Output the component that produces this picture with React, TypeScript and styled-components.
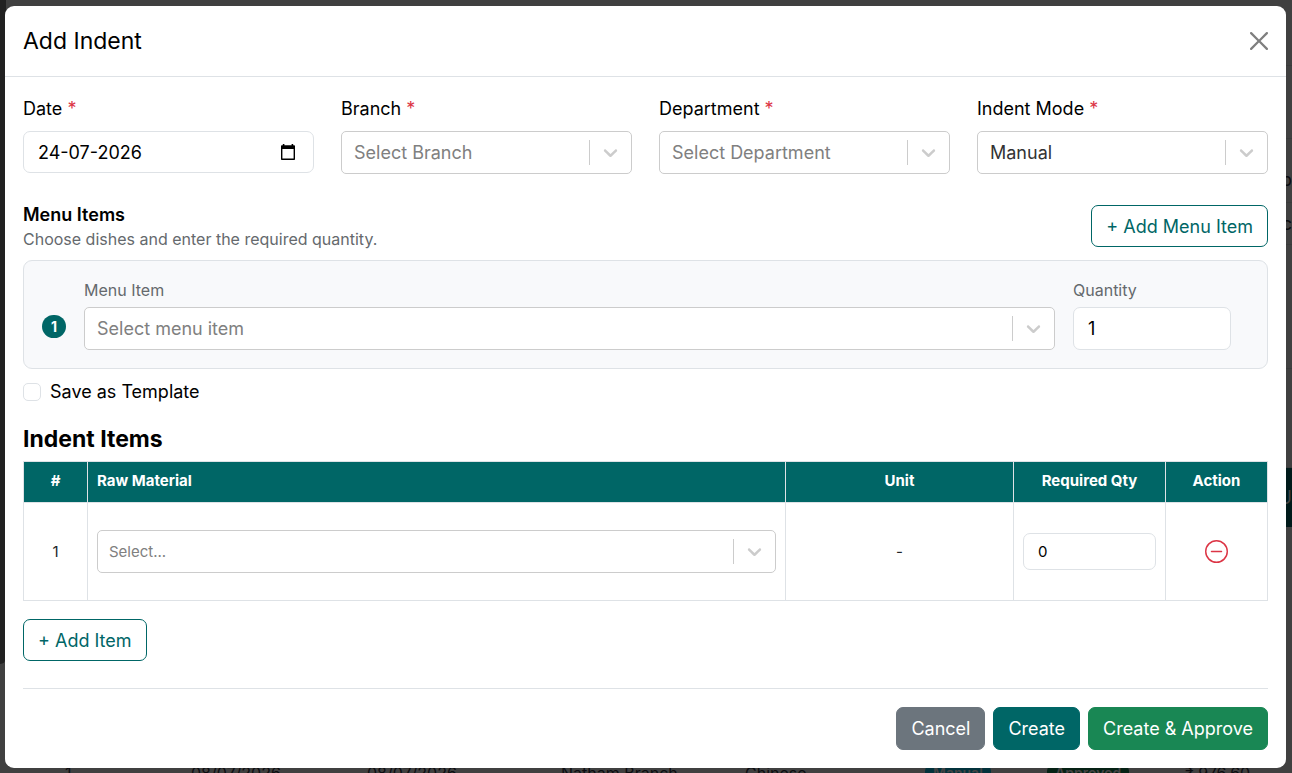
import React, { useId, useState } from 'react';
import styled, { createGlobalStyle, css } from 'styled-components';
import { BsDashCircle } from 'react-icons/bs';

const teal = '#006666';
const line = '#dee2e6';

const GlobalStyle = createGlobalStyle`
  *, *::before, *::after { box-sizing: border-box; }
  body {
    margin: 0;
    background: #404040;
    color: #000;
    font-family: Inter, "Liberation Sans", sans-serif;
    font-size: 18px;
    line-height: 27px;
  }
  button, input, select { font: inherit; }
`;

/* ---------- dimmed page behind the dialog ---------- */

const Page = styled.div`
  position: relative;
  min-height: 100vh;
  padding: 6px 6px 5px 5px;
  overflow: hidden;
`;

const Behind = styled.div`
  position: absolute;
  inset: 0;
  display: flex;
  flex-direction: column;
  justify-content: space-between;
  overflow: hidden;
  color: #0c0d10;
`;

const BehindTop = styled.div`
  display: flex;
  justify-content: space-between;
  height: 664px;
`;

const SideRail = styled.div`
  width: 6px;
  background: #212121;
  border-bottom-right-radius: 6px;
`;

const RightEdge = styled.div`
  display: flex;
  flex-direction: column;
  align-items: flex-end;
  width: 10px;
  padding-top: 65px;
`;

const EdgeCell = styled.div<{ $height: number; $fill?: string; $top?: number }>`
  display: flex;
  align-items: center;
  justify-content: flex-end;
  width: 10px;
  height: ${p => p.$height}px;
  padding-top: ${p => p.$top ?? 0}px;
  border-top: 1px solid #393a3a;
  background: ${p => p.$fill ?? 'transparent'};
  color: ${p => (p.$fill ? '#444' : 'inherit')};
  overflow: hidden;
`;

const BehindRow = styled.div`
  display: grid;
  grid-template-columns: 126px 176px 194px 184px 180px 122px 138px 1fr;
  height: 8px;
  padding-left: 65px;
  overflow: hidden;
  font-size: 16px;
  line-height: 16px;
`;

const Pill = styled.span<{ $color: string }>`
  justify-self: start;
  padding: 0 8px;
  border-radius: 6px;
  background: ${p => p.$color};
  color: #444;
  font-size: 14px;
  font-weight: 600;
`;

/* ---------- dialog ---------- */

const Dialog = styled.div`
  position: relative;
  border-radius: 9px;
  background: #fff;
`;

const DialogHeader = styled.header`
  display: flex;
  align-items: center;
  justify-content: space-between;
  height: 71px;
  padding: 0 18px;
  border-bottom: 1px solid ${line};
`;

const Title = styled.h1`
  margin: 0;
  font-size: 23px;
  font-weight: 400;
  line-height: 34px;
`;

const CloseButton = styled.button`
  display: flex;
  padding: 0;
  border: 0;
  background: none;
  color: #7f7f7f;
  cursor: pointer;
`;

const Form = styled.form`
  display: flex;
  flex-direction: column;
  padding: 18px;
`;

const FieldRow = styled.div`
  display: grid;
  grid-template-columns: repeat(4, minmax(0, 1fr));
  gap: 27px;
`;

const Field = styled.div`
  display: flex;
  flex-direction: column;
  align-items: stretch;
`;

const Label = styled.label`
  margin-bottom: 9px;
`;

const SmallLabel = styled.label`
  margin-bottom: 5px;
  color: #65696d;
  font-size: 16px;
  line-height: 23px;
`;

const Required = styled.span`
  color: #dc3545;
`;

const boxed = css`
  width: 100%;
  border: 1px solid ${line};
  border-radius: 7px;
  background: #fff;
  color: #000;
  outline: 0;
`;

const DateBox = styled.div`
  ${boxed}
  display: flex;
  align-items: center;
  height: 42px;
  padding: 0 18px 0 14px;
`;

const DateInput = styled.input`
  flex: 1;
  min-width: 0;
  padding: 0;
  border: 0;
  outline: 0;
  background: none;
  color: inherit;
`;

const PickerButton = styled.button`
  display: flex;
  padding: 0;
  border: 0;
  background: none;
  color: #000;
`;

const TextInput = styled.input<{ $compact?: boolean }>`
  ${boxed}
  display: block;
  height: ${p => (p.$compact ? 37 : 43)}px;
  padding: 0 14px;
  font-size: ${p => (p.$compact ? 15 : 18)}px;
`;

const SelectWrap = styled.div`
  position: relative;
`;

const SelectBox = styled.select<{ $placeholder: boolean; $compact?: boolean }>`
  appearance: none;
  display: block;
  width: 100%;
  height: 43px;
  padding: 0 44px 0 ${p => (p.$compact ? 11 : 12)}px;
  border: 1px solid #ccc;
  border-radius: 5px;
  outline: 0;
  background: #fff;
  color: ${p => (p.$placeholder ? '#808080' : '#333')};
  font-size: ${p => (p.$compact ? 15 : 18)}px;
`;

const Indicator = styled.span`
  position: absolute;
  inset: 9px 1px 9px auto;
  display: flex;
  align-items: center;
  padding: 0 9px;
  border-left: 1px solid #ccc;
  color: #ccc;
  pointer-events: none;
`;

const SectionHead = styled.div`
  display: flex;
  align-items: center;
  justify-content: space-between;
  margin: 27px 0 9px;
`;

const SectionTitle = styled.h2`
  margin: 0;
  font-size: 18px;
  font-weight: 600;
  line-height: 27px;
`;

const SectionNote = styled.p`
  margin: 0;
  color: #65696d;
  font-size: 16px;
  line-height: 23px;
`;

const Button = styled.button<{ $fill?: string }>`
  height: ${p => (p.$fill ? 43 : 42)}px;
  padding: 0 14px;
  border: 1px solid ${p => p.$fill ?? teal};
  border-radius: 7px;
  background: ${p => p.$fill ?? '#fff'};
  color: ${p => (p.$fill ? '#fff' : teal)};
  white-space: nowrap;
  cursor: pointer;
`;

const MenuCard = styled.div`
  display: grid;
  grid-template-columns: 24px 1fr 158px;
  align-items: end;
  gap: 18px;
  padding: 18px 36px 18px 18px;
  border: 1px solid ${line};
  border-radius: 9px;
  background: #f8f9fb;
`;

const Badge = styled.span`
  margin-bottom: 12px;
  border-radius: 12px;
  background: ${teal};
  color: #fff;
  font-size: 14px;
  font-weight: 700;
  line-height: 23px;
  text-align: center;
`;

const CheckRow = styled.label`
  display: flex;
  align-items: center;
  gap: 9px;
  margin-top: 9px;
`;

const Checkbox = styled.input`
  appearance: none;
  width: 18px;
  height: 18px;
  margin: 0;
  border: 1px solid ${line};
  border-radius: 5px;
  background: #fff;
  &:checked { background: ${teal}; }
`;

const TableTitle = styled.h2`
  margin: 21px 0 8px;
  font-size: 23px;
  font-weight: 700;
  line-height: 27px;
`;

const Table = styled.table`
  width: 100%;
  table-layout: fixed;
  border-collapse: collapse;
  font-size: 15px;
  line-height: 22px;
`;

const HeadCell = styled.th<{ $width?: number; $left?: boolean }>`
  width: ${p => (p.$width ? `${p.$width}px` : 'auto')};
  height: 41px;
  padding: 0 9px 2px;
  border: 1px solid ${line};
  background: ${teal};
  color: #fff;
  font-weight: 700;
  text-align: ${p => (p.$left ? 'left' : 'center')};
`;

const Cell = styled.td`
  height: 98px;
  padding: 0 9px;
  border: 1px solid ${line};
  color: #212529;
  text-align: center;
  vertical-align: middle;
`;

const RemoveButton = styled.button`
  padding: 0;
  border: 0;
  background: none;
  color: #dc3545;
  cursor: pointer;
  vertical-align: middle;
  svg { display: block; }
`;

const AddRow = styled.div`
  margin: 18px 0 27px;
`;

const Actions = styled.footer`
  display: flex;
  justify-content: flex-end;
  gap: 8px;
  padding-top: 18px;
  border-top: 1px solid ${line};
`;

function CloseIcon() {
  return (
    <svg width="18" height="18" viewBox="0 0 16 16" fill="currentColor" aria-hidden="true">
      <path d="M.293.293a1 1 0 0 1 1.414 0L8 6.586 14.293.293a1 1 0 1 1 1.414 1.414L9.414 8l6.293 6.293a1 1 0 0 1-1.414 1.414L8 9.414l-6.293 6.293a1 1 0 0 1-1.414-1.414L6.586 8 .293 1.707a1 1 0 0 1 0-1.414z" />
    </svg>
  );
}

function CalendarIcon() {
  return (
    <svg width="14" height="16" viewBox="0 0 14 16" fill="currentColor" fillRule="evenodd" aria-hidden="true">
      <path d="M1.8 0h1.6v1.2h7.2V0h1.6v1.2H13.2q.8 0 .8.8v13.2q0 .8-.8.8H.8q-.8 0-.8-.8V2q0-.8.8-.8h1zM1.4 5v9.6h11.2V5z" />
    </svg>
  );
}

function ChevronIcon() {
  return (
    <svg width="23" height="23" viewBox="0 0 20 20" fill="currentColor" aria-hidden="true">
      <path d="M4.516 7.548c0.436-0.446 1.043-0.481 1.576 0l3.908 3.747 3.908-3.747c0.533-0.481 1.141-0.446 1.574 0 0.436 0.445 0.408 1.197 0 1.615-0.406 0.418-4.695 4.502-4.695 4.502-0.217 0.223-0.502 0.335-0.787 0.335s-0.57-0.112-0.789-0.335c0 0-4.287-4.084-4.695-4.502s-0.436-1.17 0-1.615z" />
    </svg>
  );
}

type DropdownProps = {
  id?: string;
  label?: string;
  text: string;
  chosen?: boolean;
  compact?: boolean;
};

function Dropdown({ id, label, text, chosen = false, compact }: DropdownProps) {
  return (
    <SelectWrap>
      <SelectBox id={id} aria-label={label} $placeholder={!chosen} $compact={compact}>
        <option>{text}</option>
      </SelectBox>
      <Indicator><ChevronIcon /></Indicator>
    </SelectWrap>
  );
}

function SelectField({ name, text, chosen }: { name: string; text: string; chosen?: boolean }) {
  const id = useId();
  return (
    <Field>
      <Label htmlFor={id}>{name} <Required>*</Required></Label>
      <Dropdown id={id} text={text} chosen={chosen} />
    </Field>
  );
}

function PageBehind() {
  return (
    <Behind aria-hidden="true">
      <BehindTop>
        <SideRail />
        <RightEdge>
          <EdgeCell $height={73} />
          <EdgeCell $height={64} $top={18}><span>p</span></EdgeCell>
          <EdgeCell $height={42}><span>c</span></EdgeCell>
          <EdgeCell $height={124} />
          <EdgeCell $height={99} />
          <EdgeCell $height={60} $fill="#001a1a"><span>U</span></EdgeCell>
        </RightEdge>
      </BehindTop>
      <BehindRow>
        <span>1</span>
        <span>08/07/2026</span>
        <span>08/07/2026</span>
        <span>Natham Branch</span>
        <span>Chinese</span>
        <Pill $color="#03323c">Manual</Pill>
        <Pill $color="#062215">Approved</Pill>
        <span>₹ 976.60</span>
      </BehindRow>
    </Behind>
  );
}

export default function App() {
  const [date, setDate] = useState('24-07-2026');
  const [quantity, setQuantity] = useState('1');
  const [required, setRequired] = useState('0');

  return (
    <>
      <GlobalStyle />
      <Page>
        <PageBehind />
        <Dialog role="dialog" aria-labelledby="dialog-title">
          <DialogHeader>
            <Title id="dialog-title">Add Indent</Title>
            <CloseButton type="button" aria-label="Close"><CloseIcon /></CloseButton>
          </DialogHeader>
          <Form onSubmit={e => e.preventDefault()}>
            <FieldRow>
              <Field>
                <Label htmlFor="date">Date <Required>*</Required></Label>
                <DateBox>
                  <DateInput id="date" value={date} onChange={e => setDate(e.target.value)} />
                  <PickerButton type="button" aria-label="Open calendar"><CalendarIcon /></PickerButton>
                </DateBox>
              </Field>
              <SelectField name="Branch" text="Select Branch" />
              <SelectField name="Department" text="Select Department" />
              <SelectField name="Indent Mode" text="Manual" chosen />
            </FieldRow>

            <SectionHead>
              <div>
                <SectionTitle>Menu Items</SectionTitle>
                <SectionNote>Choose dishes and enter the required quantity.</SectionNote>
              </div>
              <Button type="button">+ Add Menu Item</Button>
            </SectionHead>

            <MenuCard>
              <Badge>1</Badge>
              <Field>
                <SmallLabel htmlFor="menu-item">Menu Item</SmallLabel>
                <Dropdown id="menu-item" text="Select menu item" />
              </Field>
              <Field>
                <SmallLabel htmlFor="quantity">Quantity</SmallLabel>
                <TextInput id="quantity" value={quantity} onChange={e => setQuantity(e.target.value)} />
              </Field>
            </MenuCard>

            <CheckRow>
              <Checkbox type="checkbox" />
              Save as Template
            </CheckRow>

            <TableTitle>Indent Items</TableTitle>
            <Table>
              <thead>
                <tr>
                  <HeadCell $width={64}>#</HeadCell>
                  <HeadCell $left>Raw Material</HeadCell>
                  <HeadCell $width={228}>Unit</HeadCell>
                  <HeadCell $width={152}>Required Qty</HeadCell>
                  <HeadCell $width={102}>Action</HeadCell>
                </tr>
              </thead>
              <tbody>
                <tr>
                  <Cell>1</Cell>
                  <Cell><Dropdown label="Raw Material" text="Select..." compact /></Cell>
                  <Cell>-</Cell>
                  <Cell>
                    <TextInput
                      $compact
                      aria-label="Required Qty"
                      value={required}
                      onChange={e => setRequired(e.target.value)}
                    />
                  </Cell>
                  <Cell>
                    <RemoveButton type="button" aria-label="Remove item"><BsDashCircle size={23} /></RemoveButton>
                  </Cell>
                </tr>
              </tbody>
            </Table>

            <AddRow><Button type="button">+ Add Item</Button></AddRow>

            <Actions>
              <Button type="button" $fill="#6c757d">Cancel</Button>
              <Button type="submit" $fill={teal}>Create</Button>
              <Button type="button" $fill="#198754">Create &amp; Approve</Button>
            </Actions>
          </Form>
        </Dialog>
      </Page>
    </>
  );
}
